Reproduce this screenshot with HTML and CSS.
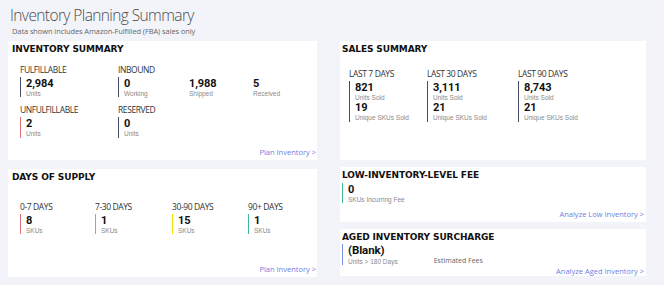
FILE: index.html
```html
<!DOCTYPE html>
<html>
<head>
<link rel="stylesheet" href="styles.css">
</head>
<body>

<div class="page">
    <h1 class="title">Inventory Planning Summary</h1>
    <p class="subtitle">Data shown includes Amazon-Fulfilled (FBA) sales only</p>

    <div class="board">
        <div class="col col-left">
            <section class="card card-inv">
                <h2 class="card-title">INVENTORY SUMMARY</h2>
                <div class="inv-grid">
                    <div class="stat">
                        <div class="label">FULFILLABLE</div>
                        <div class="metric bar-navy"><b>2,984</b><span>Units</span></div>
                    </div>
                    <div class="stat">
                        <div class="label">INBOUND</div>
                        <div class="inbound-row">
                            <div class="metric bar-navy"><b>0</b><span>Working</span></div>
                            <div class="metric plain"><b>1,988</b><span>Shipped</span></div>
                            <div class="metric plain"><b>5</b><span>Received</span></div>
                        </div>
                    </div>
                    <div class="stat">
                        <div class="label">UNFULFILLABLE</div>
                        <div class="metric bar-red"><b>2</b><span>Units</span></div>
                    </div>
                    <div class="stat">
                        <div class="label">RESERVED</div>
                        <div class="metric bar-navy"><b>0</b><span>Units</span></div>
                    </div>
                </div>
                <a class="card-link">Plan Inventory &gt;</a>
            </section>

            <section class="card card-supply">
                <h2 class="card-title">DAYS OF SUPPLY</h2>
                <div class="supply-row">
                    <div class="stat">
                        <div class="label">0-7 DAYS</div>
                        <div class="metric bar-red"><b>8</b><span>SKUs</span></div>
                    </div>
                    <div class="stat">
                        <div class="label">7-30 DAYS</div>
                        <div class="metric bar-orange"><b>1</b><span>SKUs</span></div>
                    </div>
                    <div class="stat">
                        <div class="label">30-90 DAYS</div>
                        <div class="metric bar-yellow"><b>15</b><span>SKUs</span></div>
                    </div>
                    <div class="stat">
                        <div class="label">90+ DAYS</div>
                        <div class="metric bar-teal"><b>1</b><span>SKUs</span></div>
                    </div>
                </div>
                <a class="card-link">Plan Inventory &gt;</a>
            </section>
        </div>

        <div class="col col-right">
            <section class="card card-sales">
                <h2 class="card-title">SALES SUMMARY</h2>
                <div class="sales-row">
                    <div class="stat">
                        <div class="label">LAST 7 DAYS</div>
                        <div class="metric bar-navy">
                            <b>821</b><span>Units Sold</span>
                            <b>19</b><span>Unique SKUs Sold</span>
                        </div>
                    </div>
                    <div class="stat">
                        <div class="label">LAST 30 DAYS</div>
                        <div class="metric bar-navy">
                            <b>3,111</b><span>Units Sold</span>
                            <b>21</b><span>Unique SKUs Sold</span>
                        </div>
                    </div>
                    <div class="stat">
                        <div class="label">LAST 90 DAYS</div>
                        <div class="metric bar-navy">
                            <b>8,743</b><span>Units Sold</span>
                            <b>21</b><span>Unique SKUs Sold</span>
                        </div>
                    </div>
                </div>
            </section>

            <section class="card card-fee">
                <h2 class="card-title">LOW-INVENTORY-LEVEL FEE</h2>
                <div class="metric bar-teal"><b>0</b><span>SKUs Incurring Fee</span></div>
                <a class="card-link">Analyze Low Inventory &gt;</a>
            </section>

            <section class="card card-aged">
                <h2 class="card-title">AGED INVENTORY SURCHARGE</h2>
                <div class="aged-row">
                    <div class="metric bar-blue"><b class="blank">(Blank)</b><span>Units &gt; 180 Days</span></div>
                    <div class="est">Estimated Fees</div>
                </div>
                <a class="card-link">Analyze Aged Inventory &gt;</a>
            </section>
        </div>
    </div>
</div>

</body>
</html>
```

FILE: styles.css
```css
body {
    margin: 0;
    background: #ffffff;
    font-family: "Open Sans", "Noto Sans", sans-serif;
    color: #333;
}

.page {
    width: 664px;
    height: 285px;
    background: #f3f4fa;
    padding: 5px 0 0 8px;
    box-sizing: border-box;
}

.title {
    margin: 0 0 0 2px;
    font-size: 15.5px;
    line-height: 20px;
    font-weight: 300;
    color: #4a4a4a;
    letter-spacing: -0.6px;
}

.subtitle {
    margin: 1px 0 0 4px;
    font-size: 7.5px;
    line-height: 11px;
    color: #666;
    letter-spacing: -0.1px;
}

.board {
    display: flex;
    gap: 23px;
    margin-top: 4px;
}

.col {
    display: flex;
    flex-direction: column;
}

.col-left {
    width: 309px;
    gap: 9px;
}

.col-right {
    width: 306px;
    gap: 7px;
}

.card {
    background: #fff;
    display: flex;
    flex-direction: column;
    padding: 2px 1px 3px 4px;
    box-sizing: border-box;
}

.col-right .card {
    padding-left: 2px;
    padding-right: 2px;
}

.card-inv, .card-sales { height: 119px; }
.card-supply { height: 108px; }
.card-fee { height: 55px; }
.card-aged { height: 47px; }

.card-title {
    margin: 0;
    font-family: "DejaVu Sans", sans-serif;
    font-weight: 700;
    font-size: 9px;
    line-height: 12px;
    color: #111;
    letter-spacing: -0.1px;
}

.card-link {
    margin-top: auto;
    align-self: flex-end;
    font-size: 7.5px;
    line-height: 10px;
    color: #6f80e2;
    cursor: pointer;
}

.label {
    font-size: 8.5px;
    line-height: 12px;
    color: #333;
    letter-spacing: -0.4px;
    margin-bottom: 1px;
}

.metric {
    display: flex;
    flex-direction: column;
    border-left: 1.5px solid #444c68;
    padding-left: 5px;
}

.metric b {
    font-family: Roboto, sans-serif;
    font-weight: 700;
    font-size: 11px;
    line-height: 13px;
    color: #111;
    letter-spacing: -0.1px;
}

.metric b.blank {
    font-size: 11.5px;
    line-height: 13.5px;
}

.metric span {
    font-family: "Liberation Sans", Arial, sans-serif;
    font-size: 6.5px;
    line-height: 7.4px;
    color: #8a8a8a;
}

.metric.plain {
    border-left: none;
    padding-left: 0;
}

.bar-navy { border-left-color: #444c68; }
.bar-red { border-left-color: #e0737c; }
.bar-orange { border-left-color: #ee8b5c; }
.bar-yellow { border-left-color: #f3e600; }
.bar-teal { border-left-color: #3bbb96; }
.bar-blue { border-left-color: #7d8ee2; }

/* inventory summary */
.inv-grid {
    display: grid;
    grid-template-columns: 98px 1fr;
    row-gap: 7px;
    margin: 9px 0 0 8px;
}

.inbound-row {
    display: grid;
    grid-template-columns: 71px 64px auto;
}

/* days of supply */
.supply-row {
    display: grid;
    grid-template-columns: 75px 77px 76px auto;
    margin: 18px 0 0 8px;
}

/* sales summary */
.sales-row {
    display: grid;
    grid-template-columns: 78px 91px auto;
    margin: 13px 0 0 7px;
}

/* fees */
.card-fee .metric {
    margin-top: 2px;
    align-self: flex-start;
}

.aged-row {
    display: flex;
    align-items: flex-start;
    margin-top: 1px;
}

.est {
    font-size: 7px;
    line-height: 10px;
    color: #666;
    margin: 12px 0 0 36px;
}
```
